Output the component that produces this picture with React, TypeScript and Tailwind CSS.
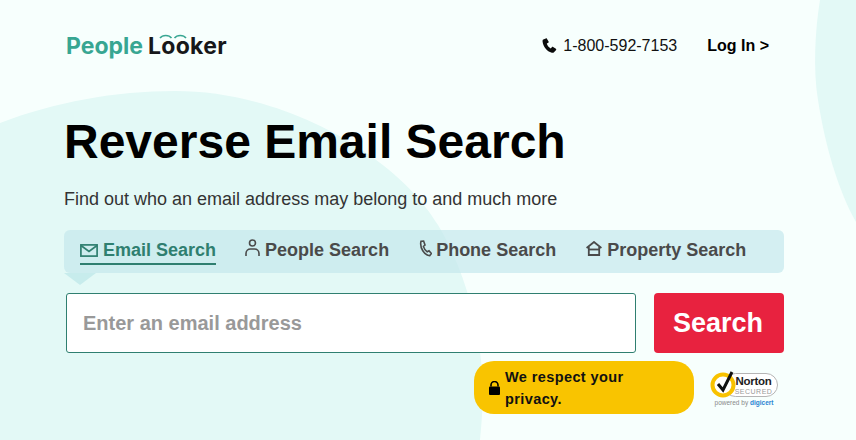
const sans = "font-['Liberation_Sans',Arial,sans-serif]"

function EmailIcon() {
  return (
    <svg width="18" height="13" viewBox="0 0 18 13" fill="none" stroke="currentColor" strokeWidth="1.7">
      <rect x="0.9" y="0.9" width="16.2" height="11.200" />
      <path d="M1 1.500 9 7.500 17 1.500" />
    </svg>
  )
}

function PersonIcon() {
  return (
    <svg width="15" height="18" viewBox="0 0 15 18" fill="none" stroke="currentColor" strokeWidth="1.6">
      <circle cx="7.500" cy="4" r="3" />
      <path d="M1 17v-2.500C1 11.800 3 10 5.500 10h4c2.500 0 4.500 1.800 4.500 4.500V17" />
    </svg>
  )
}

function PhoneOutlineIcon() {
  return (
    <svg width="13" height="17" viewBox="0 0 13 17" fill="none" stroke="currentColor" strokeWidth="1.600">
      <path d="M2 1.200 4.600 1 6 5 4.400 6.400c.6 2.200 2 4.200 3.800 5.400L10 10.800l2.300 2.700-1.600 2.200C5.500 15.500 .4 7.500 2 1.200Z" />
    </svg>
  )
}

function HouseIcon() {
  return (
    <svg width="16" height="15" viewBox="0 0 16 15" fill="none" stroke="currentColor" strokeWidth="1.800">
      <path d="M.6 7 8 1l7.400 6" />
      <path d="M2.800 6v8h10.400V6" />
      <path d="M2.800 8.500h10.400" />
    </svg>
  )
}

function PhoneSolidIcon() {
  return (
    <svg width="15" height="15" viewBox="0 0 14 15" fill="#0b0b0b">
      <path d="M3.300.4.800 1.600C.1 2 0 2.800.1 3.700c.5 4.800 4.300 9.700 9.200 11 .9.200 1.700.1 2.200-.5l2.100-2.300c.3-.4.200-.9-.2-1.200L10.600 8.900c-.4-.2-.8-.1-1.100.2l-1.200 1.400C6.400 9.600 4.800 7.700 4.300 5.600l1.500-.9c.4-.2.500-.7.300-1.100L4.400.7C4.200.3 3.700.2 3.300.4Z" />
    </svg>
  )
}

function LockIcon() {
  return (
    <svg width="11" height="14" viewBox="0 0 11 14" fill="#000">
      <path d="M2 5.500V4a3.500 3.500 0 0 1 7 0v1.500" fill="none" stroke="#000" strokeWidth="1.600" />
      <rect x="0" y="5.500" width="11" height="8.500" rx="1" />
    </svg>
  )
}

function Logo() {
  return (
    <div className="mt-[2px] flex items-baseline font-['Inter',sans-serif] text-[23px] font-bold leading-none">
      <span className="text-[#38a692]">People</span>
      <span className="relative ml-[5px] tracking-[0.3px] text-[#17181a]">
        Looker
        <svg className="absolute left-[10px] -top-[2px]" width="30" height="6" viewBox="0 0 30 6" fill="none" stroke="#38a692" strokeWidth="1.500">
          <path d="M2 5C4.500 1.500 11 1.500 13.500 5" />
          <path d="M16.500 5C19 1.500 25.500 1.500 28 5" />
        </svg>
      </span>
    </div>
  )
}

function NortonBadge() {
  return (
    <div className="relative flex w-[68px] flex-col items-center">
      <svg width="68" height="29" viewBox="0 0 68 29" fill="none">
        <rect x="14" y="4.500" width="53.500" height="23" rx="11.500" fill="#fff" stroke="#b5b5b5" />
        <circle cx="13" cy="16" r="10.500" fill="#fff" stroke="#f8c200" strokeWidth="4" />
        <path d="M8 15 13 21 22 3" stroke="#111" strokeWidth="3" />
      </svg>
      <div className="absolute left-[27px] top-[7px] flex w-[33px] flex-col items-center">
        <span className="text-[11.500px] font-bold leading-[11px] tracking-[-0.3px] text-[#222]">Norton</span>
        <span className="text-[7px] leading-[9px] tracking-[0.5px] text-[#999]">SECURED</span>
      </div>
      <span className="mt-[1px] whitespace-nowrap text-[6.500px] leading-[8px] text-[#888]">
        powered by <span className="font-bold text-[#2a84d2]">digicert</span>
      </span>
    </div>
  )
}

const tabs = [
  { label: 'People Search', Icon: PersonIcon, gap: 'ml-[29px] gap-[5px]', lift: '-mt-[5px]' },
  { label: 'Phone Search', Icon: PhoneOutlineIcon, gap: 'ml-[30px] gap-[4px]', lift: '-mt-[3px]' },
  { label: 'Property Search', Icon: HouseIcon, gap: 'ml-[30px] gap-[5px]', lift: '-mt-[3px]' },
]

export default function App() {
  return (
    <div className={`${sans} relative h-[440px] w-[856px] overflow-hidden bg-[#f7fffd]`}>
      {/* background blobs */}
      <svg className="absolute inset-0" width="856" height="440" viewBox="0 0 856 440" fill="#e3f9f6">
        <path d="M0 123C55 102 115 91 175 91 290 91 400 160 438 225 460 262 476 310 481 360 484 395 482 420 480 440H0Z" />
        <path d="M820 0C815 30 813 70 818 100 825 145 838 190 856 222V0Z" />
      </svg>

      <div className="relative pl-[64px] pr-[72px]">
        <header className="flex h-[94px] items-center justify-between pb-[3px]">
          <div className="pl-[2px]">
            <Logo />
          </div>
          <div className="flex items-center pr-[15px]">
            <PhoneSolidIcon />
            <span className="ml-[6px] text-[16px] text-[#111]">1-800-592-7153</span>
            <span className="ml-[30px] text-[16px] font-bold text-black">Log In &gt;</span>
          </div>
        </header>

        <h1 className="mt-[19px] whitespace-nowrap text-[48px] font-bold leading-[58px] text-black">Reverse Email Search</h1>
        <p className="mt-[15px] text-[18px] leading-[26px] text-[#333]">Find out who an email address may belong to and much more</p>

        <nav className="relative mt-[18px] flex h-[43px] items-center rounded-[6px] bg-[#c5e8ec]/70 pb-[3px] pl-[16px] text-[18px] font-bold text-[#4a4a4a]">
          <span className="absolute left-0 top-[43px] border-x-[16px] border-t-[12px] border-x-transparent border-t-[#c7ecec]" />
          <div className="flex h-[29px] items-center gap-[5px] border-b-2 border-[#2f7f70] pt-[2px] text-[#2f7f70]">
            <EmailIcon />
            Email Search
          </div>
          {tabs.map(({ label, Icon, gap, lift }) => (
            <div key={label} className={`flex items-center ${gap}`}>
              <span className={lift}><Icon /></span>
              {label}
            </div>
          ))}
        </nav>

        <div className="mt-[20px] flex pl-[2px]">
          <input
            readOnly
            placeholder="Enter an email address"
            className="h-[60px] w-[570px] rounded-[3px] border border-[#2f7f70] bg-white px-[16px] text-[20px] font-bold outline-none placeholder:text-[#999]"
          />
          <button className="ml-[18px] h-[60px] w-[130px] rounded-[4px] bg-[#e8223f] pr-[2px] text-[27px] font-bold text-white">Search</button>
        </div>

        <div className="mt-[8px] flex justify-end">
          <div className="flex h-[53px] w-[220px] items-center rounded-[20px] bg-[#f9c400] pl-[15px] pr-[10px]">
            <span className="mt-[1px] shrink-0"><LockIcon /></span>
            <span className="ml-[5px] text-[14.500px] font-bold leading-[22px] tracking-[0.4px] text-[#111]">We respect your privacy.</span>
          </div>
          <div className="ml-[16px] mr-[6px] mt-[8px]">
            <NortonBadge />
          </div>
        </div>
      </div>
    </div>
  )
}
